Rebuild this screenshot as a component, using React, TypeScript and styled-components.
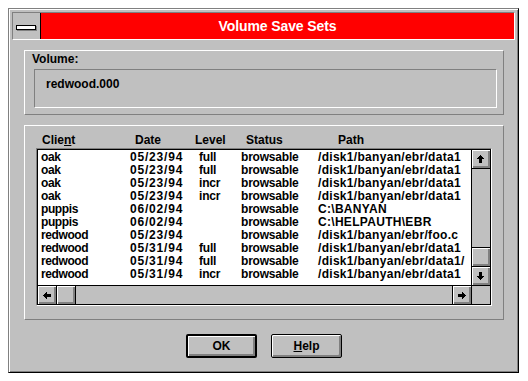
import React from "react";
import styled, { createGlobalStyle } from "styled-components";

const Global = createGlobalStyle`
  html, body { background: #ffffff; }
  body { margin: 8px; font-family: "Liberation Sans", Arial, sans-serif; }
  * { box-sizing: border-box; }
`;

const Window = styled.div`
  width: 511px;
  height: 365px;
  background: #c0c0c0;
  border-top: 1px solid #808080;
  border-left: 1px solid #808080;
  border-right: 1px solid #000;
  border-bottom: 1px solid #000;
  box-shadow: inset 1px 1px 0 #ffffff, inset -1px -1px 0 #808080;
  padding: 3px 3px 0 3px;
  display: flex;
  flex-direction: column;
  font-family: "Liberation Sans", Arial, sans-serif;
  font-weight: bold;
  font-size: 12px;
  color: #000;
`;

const TitleBar = styled.div`
  height: 28px;
  display: flex;
  border-top: 1px solid #808080;
  border-left: 1px solid #808080;
  border-bottom: 1px solid #ffffff;
  border-right: 1px solid #ffffff;
`;

const SysMenu = styled.div`
  width: 28px;
  background: #c0c0c0;
  border-right: 1px solid #000;
  display: flex;
  align-items: center;
  justify-content: flex-start;
  padding-left: 3px;
  padding-top: 2px;
`;

const SysBar = styled.div`
  width: 20px;
  height: 5px;
  background: #ffffff;
  border: 1px solid #000;
  box-shadow: 1px 1px 0 #808080;
`;

const Caption = styled.div`
  flex: 1;
  background: #ff0000;
  color: #ffffff;
  font-size: 14px;
  font-weight: bold;
  display: flex;
  align-items: center;
  justify-content: center;
  letter-spacing: -0.1px;
`;

const Body = styled.div`
  display: flex;
  flex-direction: column;
  padding: 0 11px 0 12px;
`;

const Group = styled.div<{ $top: number }>`
  margin-top: ${(p) => p.$top}px;
  border-top: 1px solid #ffffff;
  border-left: 1px solid #ffffff;
  border-right: 1px solid #808080;
  border-bottom: 1px solid #808080;
  display: flex;
  flex-direction: column;
`;

const VolumeGroup = styled(Group)`
  height: 65px;
  padding: 2px 6px 0 7px;
`;

const Label = styled.div`
  line-height: 13px;
  height: 13px;
`;

const Field = styled.div`
  margin-top: 3px;
  margin-left: 2px;
  height: 39px;
  border-top: 1px solid #808080;
  border-left: 1px solid #808080;
  border-right: 1px solid #ffffff;
  border-bottom: 1px solid #ffffff;
  padding: 8px 0 0 11px;
  line-height: 13px;
`;

const ListGroup = styled(Group)`
  height: 195px;
  padding: 8px 11px 0 11px;
`;

const HeaderRow = styled.div`
  display: grid;
  grid-template-columns: 93px 60px 51px 92px 1fr;
  padding-left: 6px;
  line-height: 13px;
  height: 13px;
  margin-bottom: 1px;
  white-space: nowrap;
`;

const Frame = styled.div`
  border-top: 1px solid #808080;
  border-left: 1px solid #808080;
  border-right: 1px solid #ffffff;
  border-bottom: 1px solid #ffffff;
`;

const ListBox = styled.div`
  border: 1px solid #000;
  display: grid;
  grid-template-columns: 433px 18px;
  grid-template-rows: 135px 18px;
  gap: 1px;
  background: #000;
`;

const Rows = styled.div`
  background: #ffffff;
  overflow: hidden;
  padding-top: 1px;
`;

const Row = styled.div`
  display: grid;
  grid-template-columns: 89px 69px 42px 77px 1fr;
  padding-left: 3px;
  height: 13px;
  line-height: 13px;
  white-space: nowrap;
`;

const Cell = styled.span<{ $track: number }>`
  letter-spacing: ${(p) => p.$track}px;
`;

const VScroll = styled.div`
  background: #c0c0c0;
  display: flex;
  flex-direction: column;
`;

const HScroll = styled.div`
  background: #c0c0c0;
  display: flex;
`;

const Corner = styled.div`
  background: #c0c0c0;
`;

type Edge = "top" | "bottom" | "left" | "right" | "both-v" | "none";

const ScrollBtn = styled.div<{ $edge: Edge }>`
  width: 18px;
  height: 18px;
  flex: none;
  background: #c0c0c0;
  box-shadow: inset 1px 1px 0 #ffffff, inset -1px -1px 0 #808080, inset -2px -2px 0 #808080;
  display: flex;
  align-items: center;
  justify-content: center;
  box-sizing: content-box;
  ${(p) => p.$edge === "top" && "border-top: 1px solid #000;"}
  ${(p) => p.$edge === "bottom" && "border-bottom: 1px solid #000;"}
  ${(p) => p.$edge === "left" && "border-left: 1px solid #000;"}
  ${(p) => p.$edge === "right" && "border-right: 1px solid #000;"}
  ${(p) => p.$edge === "both-v" && "border-top: 1px solid #000; border-bottom: 1px solid #000;"}
`;

const Track = styled.div`
  flex: 1;
`;

const ButtonRow = styled.div`
  display: flex;
  justify-content: center;
  gap: 14px;
  margin-top: 14px;
`;

const PushButton = styled.button<{ $default?: boolean }>`
  width: 71px;
  height: 24px;
  background: #c0c0c0;
  border: ${(p) => (p.$default ? 2 : 1)}px solid #000;
  border-radius: 2px;
  box-shadow: inset 1px 1px 0 #ffffff, inset -1px -1px 0 #808080, inset -2px -2px 0 #808080;
  font-family: "Liberation Sans", Arial, sans-serif;
  font-weight: bold;
  font-size: 12px;
  color: #000;
  padding: 0;
  display: flex;
  align-items: center;
  justify-content: center;
  line-height: 13px;
`;

const Arrow = ({ dir }: { dir: "up" | "down" | "left" | "right" }) => {
  const rot = { up: 0, right: 90, down: 180, left: 270 }[dir];
  return (
    <svg
      width="9"
      height="10"
      viewBox="0 0 9 10"
      shapeRendering="crispEdges"
      style={{ transform: `rotate(${rot}deg)`, marginRight: 1, marginBottom: 1 }}
    >
      <path d="M4 1h1v1h1v1h1v1h1v1H6v4H3V5H1V4h1V3h1V2h1z" fill="#000" />
    </svg>
  );
};

type Entry = [string, string, string, string, string];

const data: Entry[] = [
  ["oak", "05/23/94", "full", "browsable", "/disk1/banyan/ebr/data1"],
  ["oak", "05/23/94", "full", "browsable", "/disk1/banyan/ebr/data1"],
  ["oak", "05/23/94", "incr", "browsable", "/disk1/banyan/ebr/data1"],
  ["oak", "05/23/94", "incr", "browsable", "/disk1/banyan/ebr/data1"],
  ["puppis", "06/02/94", "", "browsable", "C:\\BANYAN"],
  ["puppis", "06/02/94", "", "browsable", "C:\\HELPAUTH\\EBR"],
  ["redwood", "05/23/94", "", "browsable", "/disk1/banyan/ebr/foo.c"],
  ["redwood", "05/31/94", "full", "browsable", "/disk1/banyan/ebr/data1"],
  ["redwood", "05/31/94", "full", "browsable", "/disk1/banyan/ebr/data1/"],
  ["redwood", "05/31/94", "incr", "browsable", "/disk1/banyan/ebr/data1"],
];

const tracks = [-0.4, 0.8, -0.2, -0.2, 0.3];

export default function App() {
  return (
    <>
      <Global />
      <Window>
        <TitleBar>
          <SysMenu>
            <SysBar />
          </SysMenu>
          <Caption>Volume Save Sets</Caption>
        </TitleBar>
        <Body>
          <VolumeGroup $top={10}>
            <Label>Volume:</Label>
            <Field>redwood.000</Field>
          </VolumeGroup>
          <ListGroup $top={10}>
            <HeaderRow>
              <span>
                Clie<u>n</u>t
              </span>
              <span>Date</span>
              <span>Level</span>
              <span>Status</span>
              <span>Path</span>
            </HeaderRow>
            <Frame>
              <ListBox>
                <Rows>
                  {data.map((r, i) => (
                    <Row key={i}>
                      {r.map((c, j) => (
                        <Cell key={j} $track={tracks[j]}>
                          {c}
                        </Cell>
                      ))}
                    </Row>
                  ))}
                </Rows>
                <VScroll>
                  <ScrollBtn $edge="bottom">
                    <Arrow dir="up" />
                  </ScrollBtn>
                  <Track />
                  <ScrollBtn $edge="both-v" />
                  <ScrollBtn $edge="none">
                    <Arrow dir="down" />
                  </ScrollBtn>
                </VScroll>
                <HScroll>
                  <ScrollBtn $edge="right">
                    <Arrow dir="left" />
                  </ScrollBtn>
                  <ScrollBtn $edge="right" />
                  <Track />
                  <ScrollBtn $edge="left">
                    <Arrow dir="right" />
                  </ScrollBtn>
                </HScroll>
                <Corner />
              </ListBox>
            </Frame>
          </ListGroup>
          <ButtonRow>
            <PushButton $default>OK</PushButton>
            <PushButton>
              <span>
                <u>H</u>elp
              </span>
            </PushButton>
          </ButtonRow>
        </Body>
      </Window>
    </>
  );
}
